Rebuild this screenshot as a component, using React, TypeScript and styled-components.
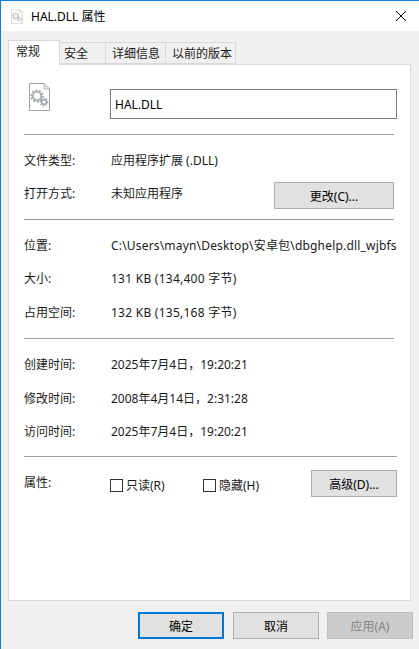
import styled, { createGlobalStyle } from "styled-components";

const GlobalStyle = createGlobalStyle`
    html, body {
        margin: 0;
        padding: 0;
        background: #ffffff;
    }
`
const Window = styled.div`
    width: 419px;
    height: 649px;
    box-sizing: border-box;
    border-top: 1px solid #0a7fd9;
    border-left: 1px solid #0a7fd9;
    background: #f0f0f0;
    display: flex;
    flex-direction: column;
    font-family: "Noto Sans", "Noto Sans CJK SC", sans-serif;
    font-size: 12px;
    color: #1a1a1a;
`
const TitleBar = styled.div`
    height: 30px;
    background: #ffffff;
    display: flex;
    align-items: center;
    padding: 0 13px 0 10px;
    gap: 8px;
`
const TitleText = styled.span`
    flex: 1;
    color: #000000;
`
const TabStrip = styled.div`
    display: flex;
    align-items: flex-end;
    height: 33px;
    margin: 0 0 0 7px;
    position: relative;
    z-index: 1;
`
const Tab = styled.div<{ $width: number; $inset: number; $active?: boolean }>`
    width: ${p => p.$width}px;
    box-sizing: border-box;
    height: ${p => (p.$active ? 25 : 22)}px;
    margin-bottom: ${p => (p.$active ? -1 : 0)}px;
    padding: ${p => (p.$active ? `0 0 4px ${p.$inset}px` : `0 0 0 ${p.$inset}px`)};
    display: flex;
    align-items: center;
    white-space: nowrap;
    background: ${p => (p.$active ? "#ffffff" : "#f0f0f0")};
    border: 1px solid #d9d9d9;
    border-left-width: ${p => (p.$active ? 1 : 0)}px;
    border-bottom-width: ${p => (p.$active ? 0 : 1)}px;
`
const Panel = styled.div`
    margin: 0 8px 0 7px;
    height: 537px;
    box-sizing: border-box;
    background: #ffffff;
    border: 1px solid #d9d9d9;
    padding: 0 16px 0 15px;
    display: flex;
    flex-direction: column;
`
const Header = styled.div`
    height: 69px;
    display: grid;
    grid-template-columns: 86px 1fr;
    align-items: start;
`
const IconWrap = styled.div`
    padding: 18px 0 0 5px;
`
const NameInput = styled.div`
    margin: 24px -3px 0 0;
    height: 30px;
    box-sizing: border-box;
    border: 1px solid #7a7a7a;
    padding-left: 4px;
    display: flex;
    align-items: center;
    color: #000000;
`
const Section = styled.section<{ $top?: number }>`
    border-top: 1px solid #a0a0a0;
    padding: ${p => p.$top ?? 8}px 0 ${p => 17 - (p.$top ?? 8)}px;
    display: grid;
    grid-template-columns: 87px 1fr;
    grid-auto-rows: 33.5px;
    align-items: center;
`
const Label = styled.div`
    white-space: nowrap;
`
const Value = styled.div<{ $tracking?: number }>`
    white-space: nowrap;
    display: flex;
    justify-content: space-between;
    align-items: center;
    letter-spacing: ${p => p.$tracking ?? 0}px;
`
const AttrRow = styled.section`
    border-top: 1px solid #a0a0a0;
    display: flex;
    align-items: flex-start;
    margin-right: -3px;
    padding-top: 13px;
`
const AttrLabel = styled(Label)`
    width: 86px;
    padding-top: 3px;
`
const Check = styled.label`
    display: flex;
    align-items: center;
    gap: 3px;
    padding-top: 6px;
    width: 93px;
`
const CheckBox = styled.span`
    width: 13px;
    height: 13px;
    box-sizing: border-box;
    border: 1px solid #333333;
    background: #ffffff;
`
const Button = styled.div<{ $width: number; $kind?: "default" | "disabled" }>`
    width: ${p => p.$width}px;
    height: 27px;
    box-sizing: border-box;
    display: flex;
    align-items: center;
    justify-content: center;
    background: ${p => (p.$kind === "disabled" ? "#cccccc" : "#e1e1e1")};
    border: ${p => (p.$kind === "default" ? "2px solid #0078d7" : p.$kind === "disabled" ? "1px solid #bfbfbf" : "1px solid #adadad")};
    color: ${p => (p.$kind === "disabled" ? "#838383" : "#000000")};
`
const ChangeButton = styled(Button)`
    margin-top: 5px;
`
const AdvancedButton = styled(Button)`
    margin-left: auto;
`
const ApplyButton = styled(Button)`
    margin-left: -1px;
`
const Footer = styled.div`
    display: flex;
    justify-content: flex-end;
    gap: 9px;
    padding: 11px 6px 0 0;
`
const CloseIcon = styled.svg`
    display: block;
`

// file page with the two gears, used large in the panel and small in the title bar
const GearFile: React.FC<{ width: number; height: number; muted?: boolean }> = ({ width, height, muted }) => (
    <svg width={width} height={height} viewBox="0 0 21 28" style={{ display: "block", opacity: muted ? 0.75 : 1 }}>
        <path d="M0.5 0.5H15L20.5 6V27.5H0.5Z" fill="#ffffff" stroke="#a3a3a3" />
        <path d="M15 0.5V6H20.5Z" fill="#e4e4e4" stroke="#b5b5b5" />
        <circle cx="8" cy="13" r="4.2" fill="none" stroke="#b0b4b8" strokeWidth="2" />
        <circle cx="8" cy="13" r="5.8" fill="none" stroke="#9a9ea2" strokeWidth="1.6" strokeDasharray="1.8 1.8" />
        <circle cx="15" cy="19" r="2.4" fill="none" stroke="#a4a8ac" strokeWidth="1.6" />
        <circle cx="15" cy="19" r="3.8" fill="none" stroke="#94989c" strokeWidth="1.2" strokeDasharray="1.4 1.4" />
    </svg>
)

export default function App() {
    return (
        <Window>
            <GlobalStyle />
            <TitleBar>
                <GearFile width={12} height={15} muted />
                <TitleText>HAL.DLL 属性</TitleText>
                <CloseIcon width="10" height="10" viewBox="0 0 10 10">
                    <path d="M0 0L10 10M10 0L0 10" stroke="#000000" strokeWidth="1" />
                </CloseIcon>
            </TitleBar>
            <TabStrip>
                <Tab $width={52} $inset={7} $active>常规</Tab>
                <Tab $width={46} $inset={4}>安全</Tab>
                <Tab $width={60} $inset={6}>详细信息</Tab>
                <Tab $width={70} $inset={6}>以前的版本</Tab>
            </TabStrip>
            <Panel>
                <Header>
                    <IconWrap><GearFile width={21} height={28} /></IconWrap>
                    <NameInput>HAL.DLL</NameInput>
                </Header>
                <Section>
                    <Label>文件类型:</Label>
                    <Value>应用程序扩展 (.DLL)</Value>
                    <Label>打开方式:</Label>
                    <Value>
                        未知应用程序
                        <ChangeButton $width={120}>更改(C)...</ChangeButton>
                    </Value>
                </Section>
                <Section>
                    <Label>位置:</Label>
                    <Value $tracking={0.18}>C:\Users\mayn\Desktop\安卓包\dbghelp.dll_wjbfs</Value>
                    <Label>大小:</Label>
                    <Value $tracking={0.25}>131 KB (134,400 字节)</Value>
                    <Label>占用空间:</Label>
                    <Value $tracking={0.25}>132 KB (135,168 字节)</Value>
                </Section>
                <Section $top={9}>
                    <Label>创建时间:</Label>
                    <Value>2025年7月4日，19:20:21</Value>
                    <Label>修改时间:</Label>
                    <Value>2008年4月14日，2:31:28</Value>
                    <Label>访问时间:</Label>
                    <Value>2025年7月4日，19:20:21</Value>
                </Section>
                <AttrRow>
                    <AttrLabel>属性:</AttrLabel>
                    <Check><CheckBox />只读(R)</Check>
                    <Check><CheckBox />隐藏(H)</Check>
                    <AdvancedButton $width={86}>高级(D)...</AdvancedButton>
                </AttrRow>
            </Panel>
            <Footer>
                <Button $width={86} $kind="default">确定</Button>
                <Button $width={86}>取消</Button>
                <ApplyButton $width={86} $kind="disabled">应用(A)</ApplyButton>
            </Footer>
        </Window>
    )
}
